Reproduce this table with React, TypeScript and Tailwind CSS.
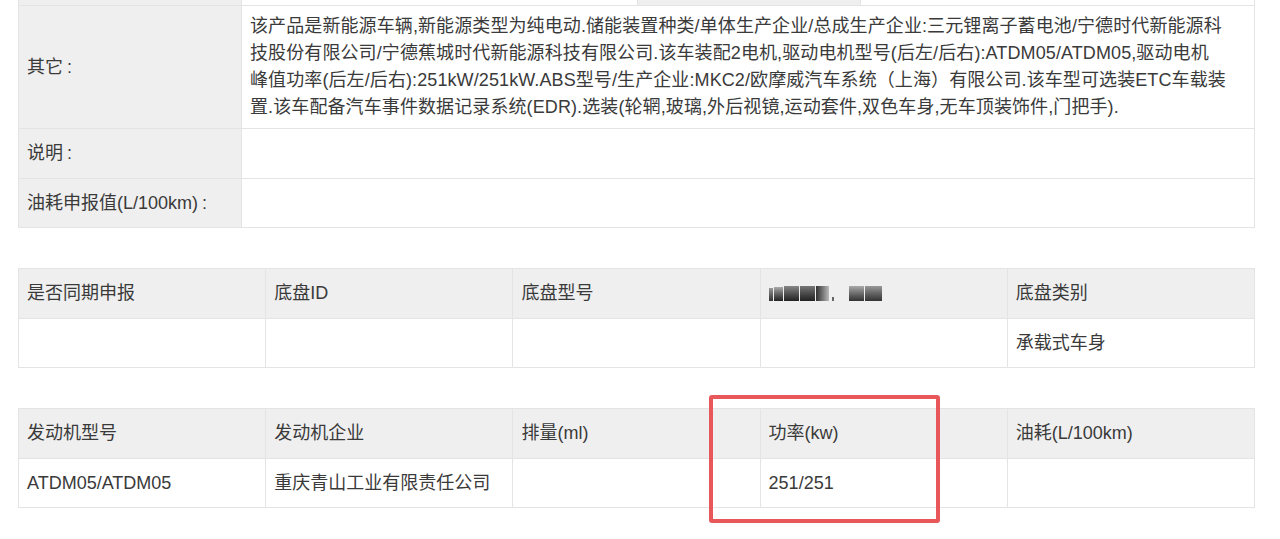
import React from "react";

const font = {
  fontFamily: '"Liberation Sans", "Noto Sans CJK SC", sans-serif',
};

function Cell({
  children,
  head = false,
  className = "",
}: {
  children?: React.ReactNode;
  head?: boolean;
  className?: string;
}) {
  return (
    <div
      className={`flex items-center border-r border-b border-[#e4e4e4] px-2 ${
        head ? "bg-[#efefef]" : "bg-white"
      } ${className}`}
    >
      {children}
    </div>
  );
}

function FiveTable({
  head,
  body,
}: {
  head: React.ReactNode[];
  body: React.ReactNode[];
}) {
  return (
    <div className="grid grid-cols-5 border-t border-l border-[#e4e4e4]">
      {head.map((h, i) => (
        <Cell key={"h" + i} head className="h-[50px]">
          {h}
        </Cell>
      ))}
      {body.map((b, i) => (
        <Cell key={"b" + i} className="h-[49px]">
          {b}
        </Cell>
      ))}
    </div>
  );
}

function Blurred() {
  return (
    <div className="flex items-end gap-[1px] blur-[0.6px]">
      <div className="h-[13px] w-[4px] bg-gradient-to-b from-[#999] to-[#333]" />
      <div className="h-[14px] w-[9px] bg-gradient-to-b from-[#aaa] to-[#222]" />
      <div className="h-[15px] w-[15px] bg-gradient-to-b from-[#888] to-[#222]" />
      <div className="h-[15px] w-[15px] bg-gradient-to-b from-[#777] to-[#222]" />
      <div className="h-[15px] w-[13px] bg-gradient-to-r from-[#333] to-[#bbb]" />
      <div className="ml-[2px] h-[4px] w-[2px] bg-[#666]" />
      <div className="ml-[14px] h-[15px] w-[15px] bg-gradient-to-b from-[#aaa] to-[#333]" />
      <div className="h-[15px] w-[17px] bg-gradient-to-b from-[#999] to-[#333]" />
    </div>
  );
}

function Label({ text }: { text: string }) {
  return (
    <span>
      {text}
      <span className="ml-[4px]">:</span>
    </span>
  );
}

export default function App() {
  const lines = [
    "该产品是新能源车辆,新能源类型为纯电动.储能装置种类/单体生产企业/总成生产企业:三元锂离子蓄电池/宁德时代新能源科",
    "技股份有限公司/宁德蕉城时代新能源科技有限公司.该车装配2电机,驱动电机型号(后左/后右):ATDM05/ATDM05,驱动电机",
    "峰值功率(后左/后右):251kW/251kW.ABS型号/生产企业:MKC2/欧摩威汽车系统（上海）有限公司.该车型可选装ETC车载装",
    "置.该车配备汽车事件数据记录系统(EDR).选装(轮辋,玻璃,外后视镜,运动套件,双色车身,无车顶装饰件,门把手).",
  ];
  return (
    <div
      className="h-[539px] w-[1280px] overflow-hidden bg-white pl-[18px] pr-[25px] text-[18px] text-[#3a3a3a]"
      style={font}
    >
      {/* table 1 */}
      <div className="border-l border-[#e4e4e4]">
        <div className="grid h-[6px] grid-cols-[223px_396px_223px_1fr]">
          <div className="border-r border-b border-[#e4e4e4] bg-[#efefef]" />
          <div className="border-r border-b border-[#e4e4e4] bg-white" />
          <div className="border-r border-b border-[#e4e4e4] bg-[#efefef]" />
          <div className="border-r border-b border-[#e4e4e4] bg-white" />
        </div>
        <div className="grid grid-cols-[223px_1fr]">
          <Cell head className="h-[123px]">
            <Label text="其它" />
          </Cell>
          <Cell className="h-[123px]">
            <div className="leading-[27px] tracking-[0.1px] whitespace-nowrap">
              {lines.map((l, i) => (
                <div key={i}>{l}</div>
              ))}
            </div>
          </Cell>
          <Cell head className="h-[50px]">
            <Label text="说明" />
          </Cell>
          <Cell className="h-[50px]" />
          <Cell head className="h-[49px]">
            <Label text="油耗申报值(L/100km)" />
          </Cell>
          <Cell className="h-[49px]" />
        </div>
      </div>

      <div className="mt-[40px]">
        <FiveTable
          head={["是否同期申报", "底盘ID", "底盘型号", <Blurred key="b" />, "底盘类别"]}
          body={["", "", "", "", "承载式车身"]}
        />
      </div>

      <div className="relative mt-[40px]">
        <FiveTable
          head={["发动机型号", "发动机企业", "排量(ml)", "功率(kw)", "油耗(L/100km)"]}
          body={["ATDM05/ATDM05", "重庆青山工业有限责任公司", "", "251/251", ""]}
        />
        <div className="pointer-events-none absolute left-[691px] top-[-13px] h-[128px] w-[231px] rounded-[3px] border-4 border-[#e8575a]" />
      </div>
    </div>
  );
}
